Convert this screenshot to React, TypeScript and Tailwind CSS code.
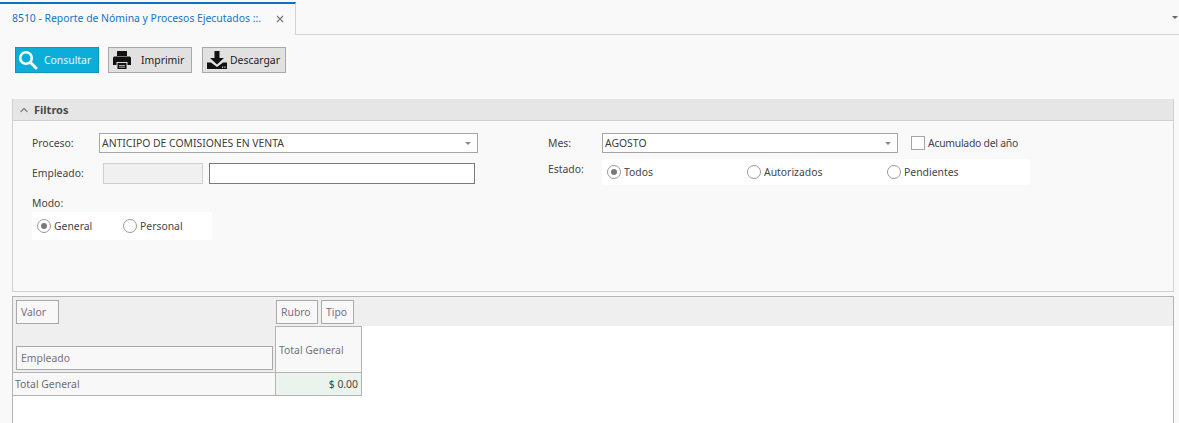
import React from 'react';
import { ChevronUp } from 'lucide-react';

const Radio = ({ label, checked, className }: { label: string; checked?: boolean; className: string }) => (
  <div className={`flex items-center gap-[3px] ${className}`}>
    <span className="w-[14px] h-[14px] rounded-full border border-[#9a9a9a] bg-white flex items-center justify-center">
      {checked && <span className="w-[6px] h-[6px] rounded-full bg-[#7a7a7a]" />}
    </span>
    <span className="pt-[1px]">{label}</span>
  </div>
);

const Combo = ({ value, className }: { value: string; className: string }) => (
  <div className={`h-[20px] bg-white border border-[#a6a6a6] flex items-center justify-between pl-[2px] pr-[6px] text-[#3c3c3c] ${className}`}>
    <span className="pt-[1px]">{value}</span>
    <span className="w-0 h-0 border-x-[3px] border-x-transparent border-t-[3px] border-t-[#8a8a8a]" />
  </div>
);

const ToolButton = ({ label, icon, className, iconWidth }: { label: string; icon: React.ReactNode; className: string; iconWidth: string }) => (
  <button className={`w-[84px] h-[26px] flex items-center border ${className}`}>
    <span className={`flex justify-center shrink-0 ${iconWidth}`}>{icon}</span>
    <span className="pt-[1px]">{label}</span>
  </button>
);

const FieldBox = ({ label, className }: { label: string; className: string }) => (
  <div className={`h-[24px] border border-[#a9a9a9] bg-[#f8f8f8] flex items-center pl-[4px] pt-[1px] text-[#77727a] ${className}`}>{label}</div>
);

export default function App() {
  return (
    <div className="w-[1179px] h-[423px] overflow-hidden bg-[#f9f9f9] text-[10.4px] text-[#444] font-['Noto_Sans','Open_Sans',sans-serif]">
      {/* tabs */}
      <div className="h-[35px] pt-[2px] border-b border-[#d4d4d4] flex justify-between">
        <div className="w-[296px] h-[33px] border-t-2 border-t-[#0f6fc0] border-r border-r-[#d4d4d4] bg-[#f9f9f9] flex items-center justify-between pl-[12px] pr-[11px] pb-[2px]">
          <span className="text-[#1573c6]">8510 - Reporte de Nómina y Procesos Ejecutados ::.</span>
          <svg width="8" height="8" viewBox="0 0 8 8" stroke="#7a7a7a" strokeWidth="1.2"><path d="M1 1l6 6M7 1L1 7" /></svg>
        </div>
        <span className="mt-[14px] mr-[1px] w-0 h-0 border-x-[3px] border-x-transparent border-t-[3px] border-t-[#666]" />
      </div>

      {/* toolbar */}
      <div className="flex pl-[15px] pt-[12px] h-[64px]">
        <ToolButton
          label="Consultar"
          iconWidth="w-[28px]"
          className="bg-[#0dadd9] border-[#1295bb] text-white/90"
          icon={
            <svg width="20" height="20" viewBox="0 0 20 20" fill="none" stroke="white" strokeWidth="2.6" strokeLinecap="round" className="mr-[4px]">
              <circle cx="8" cy="8" r="5.8" />
              <path d="M12.5 12.5L18 18" strokeWidth="3" />
            </svg>
          }
        />
        <ToolButton
          label="Imprimir"
          iconWidth="w-[32px]"
          className="ml-[9px] bg-[#e1e1e1] border-[#a9a9a9] text-[#222]"
          icon={
            <svg width="20" height="20" viewBox="0 0 20 20" fill="#111" className="mr-[6px]">
              <path d="M5 1h10v5H5zM2.5 6.5h15A1.5 1.5 0 0 1 19 8v7h-3.5v-3h-11v3H1V8a1.5 1.5 0 0 1 1.5-1.5z" />
              <path d="M5.5 13h9v6h-9zM7 15h6v.8H7zM7 16.8h6v.8H7z" fillRule="evenodd" />
            </svg>
          }
        />
        <ToolButton
          label="Descargar"
          iconWidth="w-[27px]"
          className="ml-[10px] bg-[#e1e1e1] border-[#a9a9a9] text-[#222]"
          icon={
            <svg width="22" height="20" viewBox="0 0 22 20" fill="#111">
              <path d="M8.5 1h5v7H18l-7 6.5L4 8h4.5z" />
              <path d="M1 12.5h4L11 17l6-4.5h4V19H1z" />
              <path d="M16 16.5h1.2v1.2H16zM18.3 16.5h1.2v1.2h-1.2z" fill="#e1e1e1" />
            </svg>
          }
        />
      </div>

      {/* filtros */}
      <div className="ml-[12px] w-[1162px] h-[193px] border border-[#d0d0d0] border-t-0">
        <div className="h-[22px] bg-[#e6e6e6] border-b border-[#d0d0d0] flex items-center gap-[4px] pl-[5px] pt-[1px] font-bold text-[11px] text-[#4a4a4a]">
          <ChevronUp size={12} strokeWidth={2.5} className="text-[#808080]" />
          Filtros
        </div>
        <div className="flex pl-[19px] pt-[12px]">
          <div className="w-[516px]">
            <div className="flex items-center">
              <span className="w-[67px] pt-[1px]">Proceso:</span>
              <Combo value="ANTICIPO DE COMISIONES EN VENTA" className="w-[379px]" />
            </div>
            <div className="flex items-center mt-[10px] h-[21px]">
              <span className="w-[71px]">Empleado:</span>
              <div className="w-[100px] h-[21px] bg-[#f0f0f0] border border-[#cfcfcf]" />
              <div className="ml-[6px] w-[266px] h-[21px] bg-white border border-[#7a7a7a]" />
            </div>
            <div className="mt-[10px] h-[18px] flex items-center pt-[1px]">Modo:</div>
            <div className="w-[180px] h-[28px] bg-white flex items-center pl-[5px]">
              <Radio label="General" checked className="w-[86px]" />
              <Radio label="Personal" className="w-[86px]" />
            </div>
          </div>
          <div>
            <div className="flex items-center">
              <span className="w-[54px] pt-[1px]">Mes:</span>
              <Combo value="AGOSTO" className="w-[296px]" />
              <span className="ml-[13px] w-[14px] h-[14px] bg-white border border-[#a6a6a6]" />
              <span className="ml-[3px] pt-[1px] tracking-[-0.25px]">Acumulado del año</span>
            </div>
            <div className="flex items-start mt-[6px]">
              <span className="w-[54px] pt-[3px]">Estado:</span>
              <div className="w-[428px] h-[26px] bg-white flex items-center pl-[5px]">
                <Radio label="Todos" checked className="w-[140px]" />
                <Radio label="Autorizados" className="w-[140px]" />
                <Radio label="Pendientes" className="w-[130px]" />
              </div>
            </div>
          </div>
        </div>
      </div>

      {/* pivot */}
      <div className="ml-[12px] mt-[4px] w-[1162px] h-[140px] border border-[#b4b4b4] border-b-0 bg-white">
        <div className="h-[29px] bg-[#efefef] flex items-start pt-[3px] pl-[3px]">
          <FieldBox label="Valor" className="w-[43px]" />
          <FieldBox label="Rubro" className="ml-[217px] w-[42px]" />
          <FieldBox label="Tipo" className="ml-[3px] w-[33px]" />
        </div>
        <div className="flex h-[46px]">
          <div className="w-[262px] bg-[#efefef] flex items-end pl-[3px] pb-[2px]">
            <FieldBox label="Empleado" className="w-[257px]" />
          </div>
          <div className="w-[87px] bg-[#f8f8f8] border-x border-t border-[#b4b4b4] flex items-center pl-[3px] pt-[2px] text-[#77727a]">Total General</div>
        </div>
        <div className="flex h-[24px] text-[#6c6c70]">
          <div className="w-[262px] bg-[#f8f8f8] border-y border-[#b4b4b4] flex items-center pl-[2px] pt-[1px]">Total General</div>
          <div className="w-[87px] bg-[#ebf4ec] border border-[#b4b4b4] flex items-center justify-end pr-[3px] pt-[1px] text-[#444]">$ 0.00</div>
        </div>
      </div>
    </div>
  );
}
